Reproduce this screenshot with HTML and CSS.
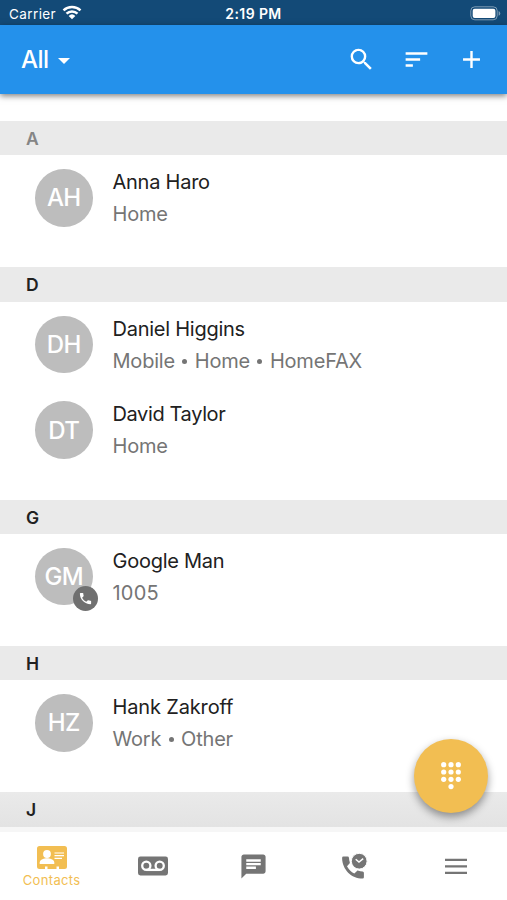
FILE: index.html
```html
<!DOCTYPE html>
<html lang="en">
<head>
<meta charset="utf-8">
<title>Contacts</title>
<link rel="stylesheet" href="styles.css">
</head>
<body>
<div class="app">
  <div class="status">
    <div class="carrier"><span>Carrier</span>
      <svg width="20" height="15" viewBox="0 0 20 15" fill="none" stroke="#fff" stroke-width="2.5"><path d="M1.5 5.4a12.4 12.4 0 0 1 17 0M4.5 8.7a8 8 0 0 1 11 0"/><path d="M10 14.2 6.7 10.9a4.8 4.8 0 0 1 6.6 0z" fill="#fff" stroke="none"/></svg>
    </div>
    <span class="time">2:19 PM</span>
    <svg class="battery" width="31" height="15" viewBox="0 0 31 15"><rect x=".8" y=".8" width="26.4" height="13" rx="4" fill="none" stroke="#fff" stroke-opacity=".45"/><rect x="2.7" y="2.7" width="22.7" height="9.3" rx="2" fill="#fff"/><path d="M28.6 5v4.8q1.7-.8 1.7-2.4t-1.7-2.4z" fill="#fff" fill-opacity=".45"/></svg>
  </div>
  <header class="appbar">
    <div class="filter"><span>All</span><i class="caret"></i></div>
    <div class="actions">
      <svg width="29" height="29" viewBox="0 0 24 24" fill="#fff"><path d="M15.5 14h-.79l-.28-.27A6.471 6.471 0 0 0 16 9.5 6.5 6.5 0 1 0 9.5 16c1.61 0 3.09-.59 4.23-1.57l.27.28v.79l5 4.99L20.49 19l-4.99-5zm-6 0C7.01 14 5 11.990 5 9.500S7.010 5 9.500 5 14 7.010 14 9.500 11.990 14 9.500 14z"/></svg>
      <svg width="29" height="29" viewBox="0 0 24 24" fill="#fff"><path d="M3 18h6v-2H3v2zM3 6v2h18V6H3zm0 7h12v-2H3v2z"/></svg>
      <svg width="29" height="29" viewBox="0 0 24 24" fill="#fff"><path d="M19 13h-6v6h-2v-6H5v-2h6V5h2v6h6v2z"/></svg>
    </div>
  </header>
  <main class="list">
    <section class="group">
      <h2 class="letter muted">A</h2>
      <div class="contact"><div class="avatar">AH</div><div class="info"><div class="name">Anna Haro</div><div class="detail">Home</div></div></div>
    </section>
    <section class="group">
      <h2 class="letter">D</h2>
      <div class="contact"><div class="avatar">DH</div><div class="info"><div class="name">Daniel Higgins</div><div class="detail">Mobile <b class="dot"></b> Home <b class="dot"></b> HomeFAX</div></div></div>
      <div class="contact"><div class="avatar">DT</div><div class="info"><div class="name tight">David Taylor</div><div class="detail">Home</div></div></div>
    </section>
    <section class="group">
      <h2 class="letter">G</h2>
      <div class="contact"><div class="avatar">GM<span class="badge"><svg width="15" height="15" viewBox="0 0 24 24" fill="#fff"><path d="M6.620 10.790c1.440 2.830 3.760 5.140 6.590 6.590l2.200-2.200c.27-.27.67-.36 1.020-.24 1.120.37 2.330.57 3.570.57.550 0 1 .45 1 1V20c0 .55-.45 1-1 1-9.390 0-17-7.610-17-17 0-.55.45-1 1-1h3.500c.55 0 1 .45 1 1 0 1.250.2 2.450.57 3.570.11.35.03.74-.25 1.020l-2.200 2.200z"/></svg></span></div><div class="info"><div class="name">Google Man</div><div class="detail number">1005</div></div></div>
    </section>
    <section class="group">
      <h2 class="letter">H</h2>
      <div class="contact"><div class="avatar">HZ</div><div class="info"><div class="name wide">Hank Zakroff</div><div class="detail">Work <b class="dot"></b> Other</div></div></div>
    </section>
    <section class="group">
      <h2 class="letter last">J</h2>
    </section>
  </main>
  <nav class="tabs">
    <div class="tab active">
      <svg width="30" height="24" viewBox="0 0 30 24"><path d="M2.500 0h25a2.500 2.500 0 0 1 2.500 2.500v18a2.500 2.500 0 0 1-2.500 2.500H22v-2.500h-2.500V23h-9v-2.500H8V23H2.500A2.500 2.500 0 0 1 0 20.500v-18A2.500 2.500 0 0 1 2.500 0z" fill="#f2be52"/><circle cx="10" cy="8" r="3.900" fill="#fff"/><path d="M2.700 18v-1.500c0-3 4.800-4.200 7.300-4.200s7.300 1.200 7.300 4.200V18z" fill="#fff"/><path d="M17.500 7H27M17.500 9.700H27M17.500 12.400h7.500" stroke="#fff" stroke-width="1.200"/></svg>
      <span>Contacts</span>
    </div>
    <div class="tab"><svg width="30" height="20" viewBox="0 0 30 20"><rect width="30" height="19" y=".5" rx="2.400" fill="#757575"/><g fill="none" stroke="#fff" stroke-width="2.300"><circle cx="8.300" cy="9.800" r="4.100"/><circle cx="21.700" cy="9.800" r="4.100"/><path d="M8.300 13.900h13.400"/></g></svg></div>
    <div class="tab"><svg width="29" height="29" viewBox="0 0 24 24" fill="#757575"><path d="M20 2H4c-1.100 0-1.990.9-1.990 2L2 22l4-4h14c1.100 0 2-.9 2-2V4c0-1.100-.9-2-2-2zM6 9h12v2H6V9zm8 5H6v-2h8v2zm4-6H6V6h12v2z"/></svg></div>
    <div class="tab"><svg width="26" height="27" viewBox="0 0 26 27"><path d="M1.400 3.600h4.200q1.300 0 1.400 1.300c.1 1.600.3 3 .8 4.400.1.500 0 .9-.3 1.300l-2.500 2.700c1.700 3.300 4.100 5.600 7.300 7.300l2.700-2.600c.4-.4.800-.5 1.300-.3 1.400.5 2.800.7 4.300.7q1.300.1 1.300 1.400v4.400q0 1.300-1.300 1.300C9.400 25.500.3 16.500.1 4.900q0-1.300 1.300-1.300z" fill="#757575"/><circle cx="17.200" cy="8.200" r="7.900" fill="#757575" stroke="#fff" stroke-width="1"/><path d="m13.700 6.200 3.300 2.900 4.200-3.400" fill="none" stroke="#fff" stroke-width="1.500"/></svg></div>
    <div class="tab"><svg width="24" height="17" viewBox="0 0 24 17" stroke="#757575" stroke-width="2.300"><path d="M1 1.800h22M1 8.300h22M1 14.800h22"/></svg></div>
  </nav>
  <div class="fab"><svg width="20" height="28" viewBox="0 0 20 28" fill="#fff"><circle cx="2.700" cy="2.700" r="2.600"/><circle cx="10" cy="2.700" r="2.600"/><circle cx="17.300" cy="2.700" r="2.600"/><circle cx="2.700" cy="10" r="2.600"/><circle cx="10" cy="10" r="2.600"/><circle cx="17.300" cy="10" r="2.600"/><circle cx="2.700" cy="17.300" r="2.600"/><circle cx="10" cy="17.300" r="2.600"/><circle cx="17.300" cy="17.300" r="2.600"/><circle cx="10" cy="24.600" r="2.600"/></svg></div>
</div>
</body>
</html>
```
FILE: styles.css
```css
* { box-sizing: border-box; }
body { margin: 0; font-family: Inter, "Liberation Sans", sans-serif; color: #212121; background: #fff; }
svg { display: block; flex: none; }
.app { position: relative; width: 507px; height: 900px; overflow: hidden; display: flex; flex-direction: column; }
.status { height: 25px; flex: none; background: #134a77; color: #fff; display: grid; grid-template-columns: 1fr auto 1fr; align-items: center; padding: 2px 6px 0 9px; font-size: 13.5px; }
.carrier { display: flex; align-items: center; gap: 6px; letter-spacing: .4px; }
.carrier svg { margin-top: -2px; }
.time { font-weight: 600; font-size: 14px; letter-spacing: .4px; margin-left: -3px; }
.battery { justify-self: end; margin-top: -1px; }
.appbar { height: 69px; flex: none; background: #2491eb; color: #fff; display: flex; align-items: center; justify-content: space-between; padding: 0 21px; box-shadow: 0 2px 6px rgba(0,0,0,.5); z-index: 1; }
.filter { display: flex; align-items: center; gap: 9px; font-size: 24px; font-weight: 450; letter-spacing: -.5px; }
.caret { border: 6px solid transparent; border-top-color: #fff; border-bottom: 0; margin-top: 3px; }
.actions { display: flex; gap: 26px; }
.list { flex: 1; min-height: 0; overflow: hidden; padding-top: 27px; }
.group { padding-bottom: 26.700px; }
.letter { margin: 0; height: 34.200px; line-height: 35px; padding-left: 26px; background: #eaeaea; font-size: 17.500px; font-weight: 600; }
.letter.muted { color: #858585; }
.letter.last { background: linear-gradient(#eaeaea, #e3e3e3); }
.contact { height: 85.600px; padding: 14px 0 0 35px; display: flex; gap: 20px; }
.avatar { position: relative; width: 57.500px; height: 57.500px; flex: none; border-radius: 50%; background: #bdbdbd; color: #fff; font-size: 24px; font-weight: 450; letter-spacing: -.6px; display: flex; align-items: center; justify-content: center; }
.badge { position: absolute; left: 38px; top: 38px; width: 25px; height: 25px; border-radius: 50%; background: #707070; display: flex; align-items: center; justify-content: center; }
.info { margin-top: -1px; }
.name, .detail { font-size: 20px; line-height: 28px; white-space: nowrap; }
.name { letter-spacing: -.25px; }
.name.tight { letter-spacing: -.38px; }
.name.wide { letter-spacing: -.15px; }
.detail { margin-top: 4px; color: #757575; letter-spacing: -.2px; }
.detail.number { letter-spacing: .2px; }
.dot { display: inline-block; width: 5px; height: 5px; border-radius: 50%; background: #757575; vertical-align: 4px; margin: 0 2px; }
.tabs { height: 73px; flex: none; border-top: 5px solid #f6f6f6; background: #fff; display: grid; grid-template-columns: repeat(5, 1fr); padding-left: 1px; }
.tab { display: flex; flex-direction: column; align-items: center; justify-content: center; }
.active { color: #f2be52; font-size: 13px; line-height: 16px; gap: 2px; padding-top: 1px; }
.active span { letter-spacing: .35px; }
.fab { position: absolute; left: 414px; top: 739px; width: 74px; height: 74px; border-radius: 50%; background: #f2be52; display: flex; align-items: center; justify-content: center; box-shadow: 0 4px 8px rgba(0,0,0,.4); }
```
